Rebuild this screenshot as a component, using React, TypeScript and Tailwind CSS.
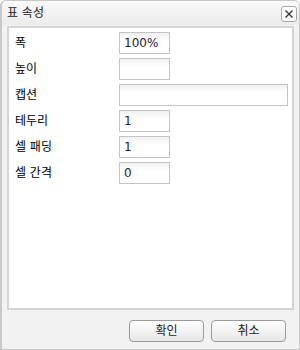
import React from 'react'

const font = { fontFamily: '"DejaVu Sans", "Noto Sans CJK KR", sans-serif' }

function Field({ label, value, wide }: { label: string; value: string; wide?: boolean }) {
  return (
    <div className="flex h-[22px] items-center">
      <div className="w-[110px] pl-[6px] text-[12px] text-black">{label}</div>
      <div
        className={`flex h-[22px] items-center border border-[#c3c3c3] bg-gradient-to-b from-[#f1f1f1] to-white to-[40%] px-[4px] text-[12px] text-[#1a1a40] ${
          wide ? 'w-[169px]' : 'w-[51px]'
        }`}
      >
        {value}
      </div>
    </div>
  )
}

export default function App() {
  return (
    <div
      className="flex h-[350px] w-[300px] flex-col overflow-hidden rounded-t-[6px] border border-[#c8c8c8] bg-[#f2f2f2] border-l-[2px]"
      style={font}
    >
      <div className="flex h-[24px] items-center justify-between bg-gradient-to-b from-[#fafafa] to-[#ebebeb] pl-[5px] pr-[2px]">
        <span className="text-[12px] text-[#222]">표 속성</span>
        <button className="mt-[2px] flex h-[16px] w-[16px] items-center justify-center rounded-[3px] border border-[#a8a8a8] bg-white">
          <svg width="10" height="10" viewBox="0 0 10 10">
            <path d="M1.5 1.5 L8.5 8.5 M8.5 1.5 L1.5 8.5" stroke="#333" strokeWidth="1.4" />
          </svg>
        </button>
      </div>

      <div className="mx-[5px] mt-[1px] h-[284px] border-[2px] border-[#d4d4d4] bg-white">
        <div className="flex flex-col gap-[4px] pt-[4px]">
          <Field label="폭" value="100%" />
          <Field label="높이" value="" />
          <Field label="캡션" value="" wide />
          <Field label="테두리" value="1" />
          <Field label="셀 패딩" value="1" />
          <Field label="셀 간격" value="0" />
        </div>
      </div>

      <div className="mt-[10px] flex justify-end gap-[7px] pr-[13px]">
        <button className="h-[22px] w-[75px] rounded-[4px] border border-[#9a9a9a] bg-gradient-to-b from-white to-[#e6e6e6] text-[12px] text-[#222]">
          확인
        </button>
        <button className="h-[22px] w-[75px] rounded-[4px] border border-[#9a9a9a] bg-gradient-to-b from-white to-[#e6e6e6] text-[12px] text-[#222]">
          취소
        </button>
      </div>
    </div>
  )
}
